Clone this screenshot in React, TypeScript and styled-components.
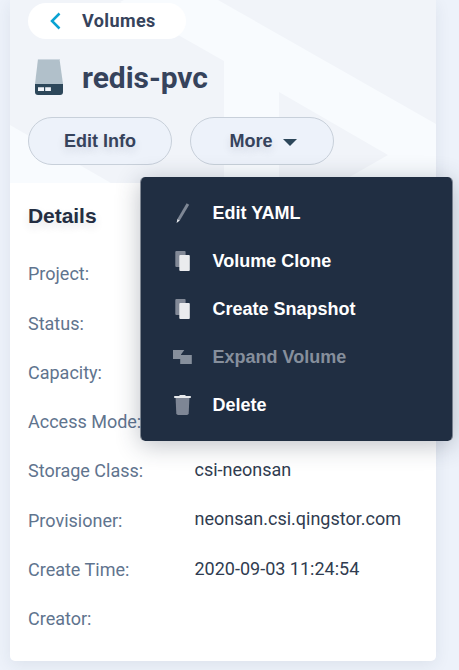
import React from "react";
import styled, { createGlobalStyle } from "styled-components";

const GlobalStyle = createGlobalStyle`
  * { box-sizing: border-box; }
  body { margin: 0; background: #edf2fa; overflow: hidden; }
`;

const Page = styled.div`
  width: 459px;
  height: 670px;
  padding: 0 23px 0 10px;
  overflow: hidden;
  background: #edf2fa;
  color: #242e42;
  font-family: Roboto, "Liberation Sans", sans-serif;
`;

const Card = styled.main`
  height: 661px;
  background: #fff;
  border-radius: 0 0 5px 5px;
  box-shadow: 0 4px 16px rgba(39, 50, 71, 0.08);
`;

const Header = styled.header`
  position: relative;
  height: 183px;
  padding: 3px 18px 0;
  background: #f1f4f9;
`;

const Pattern = styled.svg`
  position: absolute;
  inset: 0;
`;

const HeaderContent = styled.div`
  position: relative;
`;

const BackLink = styled.a`
  display: flex;
  align-items: center;
  width: 158px;
  height: 36px;
  padding-left: 22px;
  gap: 21px;
  border-radius: 18px;
  background: #fff;
  color: #36435c;
  font-size: 18px;
  font-weight: 700;
  letter-spacing: 0.4px;
`;

const BackLabel = styled.span`
  padding-bottom: 1px;
`;

const TitleRow = styled.div`
  display: flex;
  align-items: center;
  height: 38px;
  margin-top: 19px;
  padding-left: 6px;
  gap: 18px;
`;

const Title = styled.h1`
  margin: 1px 0 0;
  color: #36435c;
  font-size: 30px;
  line-height: 38px;
  font-weight: 700;
  letter-spacing: -0.05px;
`;

const Actions = styled.div`
  position: relative;
  display: flex;
  gap: 18px;
  margin-top: 21px;
`;

const Button = styled.button<{ $dropdown?: boolean }>`
  display: flex;
  align-items: center;
  justify-content: center;
  gap: 10px;
  width: 144px;
  height: 48px;
  padding: 1px 0 0 ${({ $dropdown }) => ($dropdown ? "2px" : "0")};
  border: 1px solid #c8d0da;
  border-radius: 24px;
  background: #edf2fa;
  color: #36435c;
  font: 700 18px "Liberation Sans", Arial, sans-serif;
  text-shadow: 0 4px 8px rgba(36, 46, 66, 0.13);
`;

const Menu = styled.nav`
  position: absolute;
  z-index: 2;
  top: 60px;
  left: 112px;
  width: 313px;
  height: 264px;
  padding: 12px 0;
  border: solid rgba(32, 46, 66, 0.5);
  border-width: 0 1px;
  border-radius: 5px;
  background: #202e42;
  background-clip: padding-box;
  box-shadow: 0 4px 24px rgba(36, 46, 66, 0.3);
`;

const MenuItem = styled.div<{ $disabled?: boolean }>`
  display: flex;
  align-items: center;
  height: 48px;
  padding-left: 31px;
  gap: 19.5px;
  color: ${({ $disabled }) => ($disabled ? "#868f9c" : "#fff")};
  font: 700 18px "Liberation Sans", Arial, sans-serif;
`;

const Section = styled.section`
  padding: 20px 18px 0;
`;

const SectionTitle = styled.h2`
  margin: 0 0 20.7px;
  color: #242e42;
  font: 700 21px/26px "Liberation Sans", Arial, sans-serif;
  letter-spacing: -0.05px;
  text-shadow: 0 4px 8px rgba(36, 46, 66, 0.13);
`;

const Row = styled.div`
  display: grid;
  grid-template-columns: 166.5px 1fr;
  align-items: center;
  height: 49.25px;
`;

const Label = styled.span`
  color: #5f748e;
  font-size: 18px;
  line-height: 24px;
  white-space: nowrap;
`;

const Value = styled.span`
  padding-bottom: 2.4px;
  color: #303c50;
  font-size: 18px;
  line-height: 24px;
  white-space: nowrap;
`;

type IconKind = "pen" | "copy" | "expand" | "trash";

function MenuIcon({ kind }: { kind: IconKind }) {
  return (
    <svg width="21" height="24" viewBox="0 0 21 24">
      {kind === "pen" && (
        <>
          <path d="M14.6 2.2 17.2 3.7 7.8 19.4 5.4 17.9Z" fill="#7e8795" />
          <path d="m5.4 17.9 2.4 1.5L4.6 22Z" fill="#e8eaed" />
        </>
      )}
      {kind === "copy" && (
        <>
          <rect x="3.3" y="2" width="10.3" height="16" rx="1" fill="#828997" />
          <rect x="7.3" y="6" width="10.5" height="16" rx="1" fill="#eaebee" />
        </>
      )}
      {kind === "expand" && (
        <path d="M1 5H12.3L9 9.5V10H19.8V19H8.2V14H1Z" fill="#868f9c" />
      )}
      {kind === "trash" && (
        <>
          <path d="M3.6 5H17.4l-.7 15.2q-.1 1.8-1.8 1.8H6.2Q4.4 22 4.3 20.2Z" fill="#7e8695" />
          <path d="M2.2 3H7.5V2h6v1h5.3v2H2.2Z" fill="#e8eaed" />
        </>
      )}
    </svg>
  );
}

const menuItems: { label: string; kind: IconKind; disabled?: boolean }[] = [
  { label: "Edit YAML", kind: "pen" },
  { label: "Volume Clone", kind: "copy" },
  { label: "Create Snapshot", kind: "copy" },
  { label: "Expand Volume", kind: "expand", disabled: true },
  { label: "Delete", kind: "trash" },
];

const details = [
  ["Project:", ""],
  ["Status:", ""],
  ["Capacity:", ""],
  ["Access Mode:", ""],
  ["Storage Class:", "csi-neonsan"],
  ["Provisioner:", "neonsan.csi.qingstor.com"],
  ["Create Time:", "2020-09-03 11:24:54"],
  ["Creator:", ""],
];

export default function App() {
  return (
    <Page>
      <GlobalStyle />
      <Card>
        <Header>
          <Pattern width="426" height="183" viewBox="0 0 426 183">
            <path
              fill="#f8fbfe"
              fillRule="evenodd"
              d="M114 0H208L426 124V183H214V61L110 2ZM269 92V183H329L378 155Z"
            />
            <path d="M0 125 101 183H0Z" fill="#f8fbfe" />
          </Pattern>
          <HeaderContent>
            <BackLink>
              <svg width="11" height="18" viewBox="0 0 11 18" fill="none">
                <path d="M9.5 1.5 2 9l7.5 7.5" stroke="#0aa2d2" strokeWidth="2.5" />
              </svg>
              <BackLabel>Volumes</BackLabel>
            </BackLink>
            <TitleRow>
              <svg width="30" height="38" viewBox="0 0 30 38">
                <path d="M4 1H25.5L29 26V28H1V26Z" fill="#b1c0ca" />
                <path d="M4 1H25.5V2H4Z" fill="#ccd6df" />
                <path d="M1 26H29V34q0 3-3 3H4q-3 0-3-3Z" fill="#2d475a" />
                <path d="M4 29.3h6v3.6H4ZM11.2 29.3h5.7v3.6h-5.7Z" fill="#f1f4f9" />
              </svg>
              <Title>redis-pvc</Title>
            </TitleRow>
            <Actions>
              <Button>Edit Info</Button>
              <Button $dropdown>
                More
                <svg width="14" height="8" viewBox="0 0 14 8">
                  <path d="M0 1H14L7 8Z" fill="#2d475a" />
                </svg>
              </Button>
              <Menu>
                {menuItems.map((item) => (
                  <MenuItem key={item.label} $disabled={item.disabled}>
                    <MenuIcon kind={item.kind} />
                    {item.label}
                  </MenuItem>
                ))}
              </Menu>
            </Actions>
          </HeaderContent>
        </Header>
        <Section>
          <SectionTitle>Details</SectionTitle>
          {details.map(([label, value]) => (
            <Row key={label}>
              <Label>{label}</Label>
              <Value>{value}</Value>
            </Row>
          ))}
        </Section>
      </Card>
    </Page>
  );
}
